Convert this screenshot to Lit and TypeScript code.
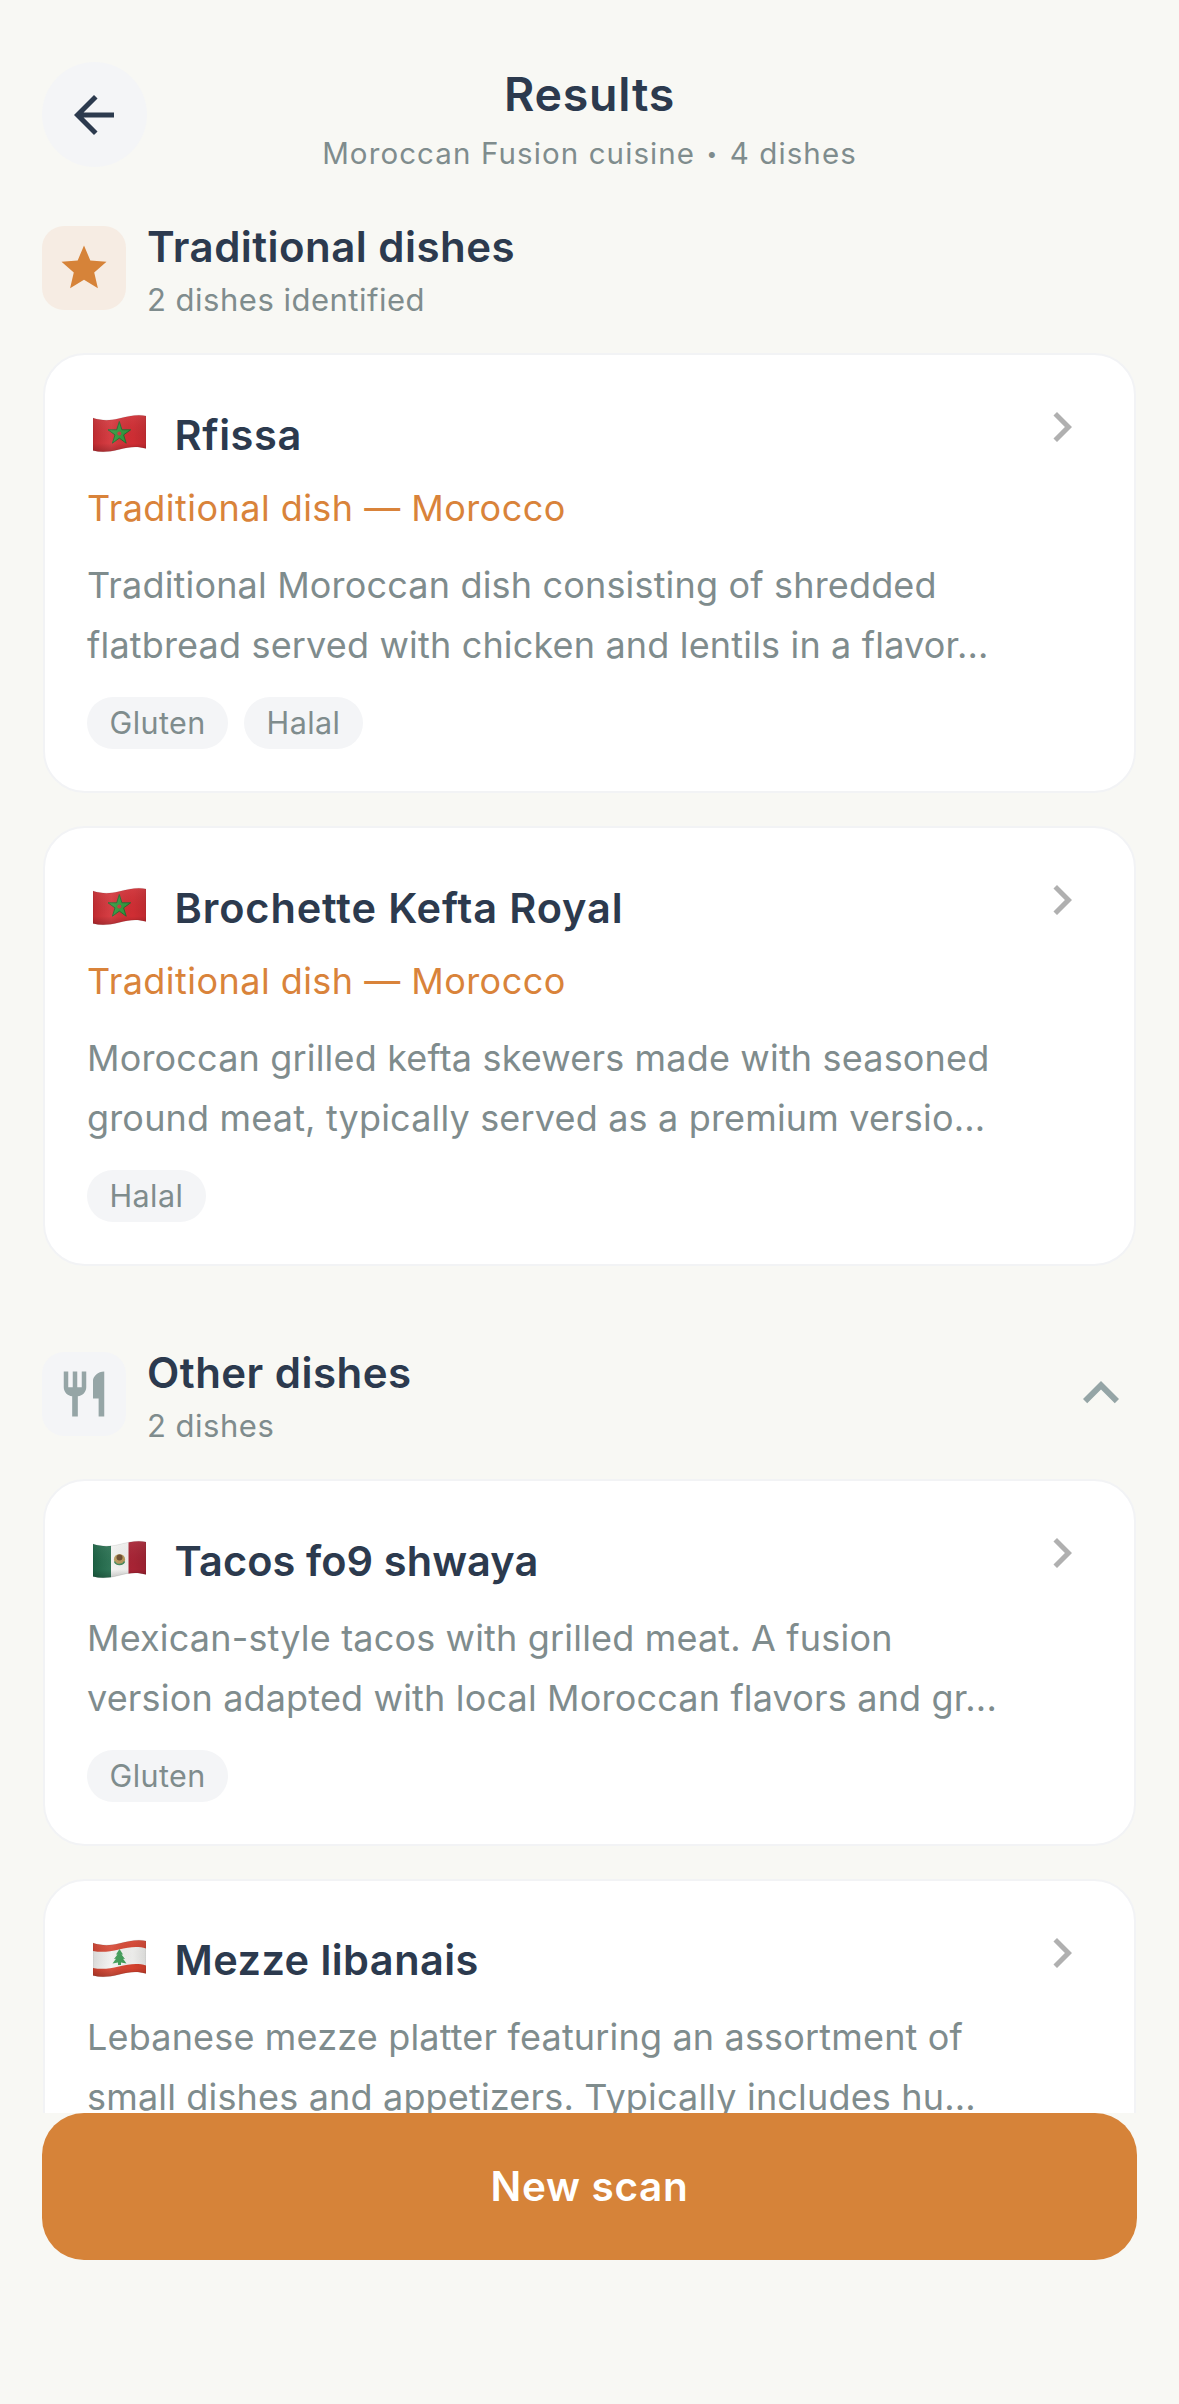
import { LitElement, html, css, svg } from "lit";
import { customElement } from "lit/decorators.js";

const WAVE = "M0 4C8 6.5 16 7 26 4.5C36 2 45 0 53 2V34.5C45 32 36 32.5 26 35.5C16 38 8 38.5 0 36.5Z";

function flag(id: string, body: unknown) {
  return html`<svg class="flag" viewBox="0 0 53 39" aria-hidden="true">
    <defs>
      <clipPath id="wave-${id}"><path d=${WAVE}></path></clipPath>
      <linearGradient id="shade-${id}" x1="0" y1="0" x2="1" y2="0">
        <stop offset="0" stop-color="#000" stop-opacity=".1"></stop>
        <stop offset=".35" stop-color="#fff" stop-opacity=".08"></stop>
        <stop offset=".75" stop-color="#000" stop-opacity=".02"></stop>
        <stop offset="1" stop-color="#000" stop-opacity=".1"></stop>
      </linearGradient>
      <linearGradient id="edge-${id}" x1="0" y1="0" x2="0" y2="1">
        <stop offset="0" stop-color="#fff" stop-opacity=".08"></stop>
        <stop offset=".75" stop-color="#000" stop-opacity="0"></stop>
        <stop offset="1" stop-color="#000" stop-opacity=".22"></stop>
      </linearGradient>
    </defs>
    <g clip-path="url(#wave-${id})">${body}
      <rect width="53" height="39" fill="url(#shade-${id})"></rect>
      <rect width="53" height="39" fill="url(#edge-${id})"></rect>
    </g>
    <path d=${WAVE} fill="none" stroke="#000" stroke-opacity=".12" stroke-width=".7"></path>
  </svg>`;
}

const morocco = () =>
  flag("ma", svg`<rect width="53" height="39" fill="#d42e34"></rect>
    <path d="M26.3 7.5L28.9 15.8H37.6L30.6 20.9L33.2 29.2L26.3 24.1L19.4 29.2L22 20.9L15 15.8H23.7Z" fill="#2f9a3c" stroke="#1d6a2c" stroke-width=".9" stroke-linejoin="round"></path>
    <circle cx="26.3" cy="19.4" r="2" fill="#c8383a"></circle>`);

const mexico = () =>
  flag("mx", svg`<rect width="18" height="39" fill="#1f6b4a"></rect>
    <rect x="18" width="17.5" height="39" fill="#f5f5f3"></rect>
    <rect x="35.5" width="17.5" height="39" fill="#ab2435"></rect>
    <circle cx="26.5" cy="19.5" r="5.6" fill="#b99a5c"></circle>
    <circle cx="26.5" cy="17.5" r="3" fill="#6c4a2c"></circle>
    <path d="M21.5 21.5C23 25.5 30 25.5 31.5 21.5" fill="none" stroke="#3f8a5e" stroke-width="1.4"></path>`);

const lebanon = () =>
  flag("lb", svg`<rect width="53" height="39" fill="#f4f4f2"></rect>
    <path d="M0 0H53V9.5C45 7 36 8 26 10.5C16 13 8 13.5 0 12Z" fill="#d8432f"></path>
    <path d="M0 29C8 30.5 16 30 26 27.5C36 25 45 24 53 26.5V39H0Z" fill="#d8432f"></path>
    <path d="M26.5 10L30 15.5H28.5L32 20L30 19.8L33.5 24.5L28 23.5V26H25V23.5L19.5 24.5L23 19.8L21 20L24.5 15.5H23Z" fill="#3f9e56"></path>`);

const ICON_BACK = "M20 11H7.83l5.59-5.59L12 4l-8 8 8 8 1.41-1.41L7.83 13H20v-2z";
const ICON_STAR = "M12 17.27L18.18 21l-1.64-7.03L22 9.24l-7.19-.61L12 2 9.19 8.63 2 9.24l5.46 4.73L5.82 21z";
const ICON_RESTAURANT = "M11 9H9V2H7v7H5V2H3v7c0 2.12 1.66 3.84 3.75 3.97V22h2.5v-9.03C11.34 12.84 13 11.12 13 9V2h-2v7zm5-3v8h2.5v8H21V2c-2.76 0-5 2.24-5 4z";
const ICON_RIGHT = "M8.59 16.59L13.17 12 8.59 7.41 10 6l6 6-6 6z";
const ICON_UP = "M7.41 15.41L12 10.83l4.59 4.58L18 14l-6-6-6 6z";

const icon = (d: string, cls: string) =>
  html`<svg class=${cls} viewBox="0 0 24 24" aria-hidden="true"><path d=${d}></path></svg>`;

interface Dish {
  flag: () => unknown;
  name: string;
  nameSpacing: number;
  category?: string;
  lines: [string, string];
  tags: string[];
}

const traditional: Dish[] = [
  {
    flag: morocco,
    name: "Rfissa",
    nameSpacing: 0.6,
    category: "Traditional dish — Morocco",
    lines: ["Traditional Moroccan dish consisting of shredded", "flatbread served with chicken and lentils in a flavor..."],
    tags: ["Gluten", "Halal"],
  },
  {
    flag: morocco,
    name: "Brochette Kefta Royal",
    nameSpacing: 0.88,
    category: "Traditional dish — Morocco",
    lines: ["Moroccan grilled kefta skewers made with seasoned", "ground meat, typically served as a premium versio..."],
    tags: ["Halal"],
  },
];

const others: Dish[] = [
  {
    flag: mexico,
    name: "Tacos fo9 shwaya",
    nameSpacing: 0.1,
    lines: ["Mexican-style tacos with grilled meat. A fusion", "version adapted with local Moroccan flavors and gr..."],
    tags: ["Gluten"],
  },
  {
    flag: lebanon,
    name: "Mezze libanais",
    nameSpacing: 0.45,
    lines: ["Lebanese mezze platter featuring an assortment of", "small dishes and appetizers. Typically includes hu..."],
    tags: ["Vegetarian"],
  },
];

@customElement("app-root")
export class AppRoot extends LitElement {
  static styles = css`
    :host {
      display: block;
      font-family: Inter, "Liberation Sans", sans-serif;
      color: #2c3a4e;
    }
    * { box-sizing: border-box; }
    .page {
      height: 2404px;
      background: #f8f8f4;
      display: flex;
      flex-direction: column;
      overflow: hidden;
    }
    .scroll {
      flex: 1;
      min-height: 0;
      overflow: hidden;
      padding: 62px 42px 0;
    }
    .header {
      display: grid;
      grid-template-columns: 105px 1fr 105px;
      margin-bottom: 54px;
    }
    .back {
      width: 105px;
      height: 105px;
      border-radius: 50%;
      background: #f4f5f7;
      display: flex;
      align-items: center;
      justify-content: center;
    }
    .i-back { width: 60px; height: 60px; fill: #2c3a4e; margin-left: -1px; }
    .head-text { text-align: center; padding-top: 5px; }
    .head-title { font-size: 46.5px; line-height: 54px; font-weight: 600; letter-spacing: .75px; }
    .head-sub { font-size: 29.5px; line-height: 38px; margin-top: 13px; color: #7f8c8d; white-space: nowrap; letter-spacing: 1.1px; }
    .dot { font-size: 19px; line-height: 0; vertical-align: 3px; margin: 0 2px; }
    .section-head { display: flex; align-items: flex-start; gap: 21px; margin-bottom: 34px; }
    .sec-icon {
      width: 84px;
      height: 84px;
      border-radius: 22px;
      flex: none;
      display: flex;
      align-items: center;
      justify-content: center;
      background: #f4f5f7;
    }
    .sec-icon.warm { background: #f6ece3; }
    .i-star { width: 54px; height: 54px; fill: #d68339; }
    .i-rest { width: 54px; height: 54px; fill: #95a5a6; }
    .i-up { width: 72px; height: 72px; fill: #95a5a6; margin-left: auto; margin-top: 5px; flex: none; }
    .sec-title { font-size: 42px; line-height: 42px; font-weight: 600; letter-spacing: .47px; }
    .sec-sub { font-size: 31px; line-height: 38px; margin-top: 13px; color: #7f8c8d; letter-spacing: .5px; }
    .cards { display: flex; flex-direction: column; gap: 33px; padding: 0 1px; }
    .section + .section { margin-top: 86px; }
    .card {
      background: #fff;
      border: 2px solid #f2f3f5;
      border-radius: 42px;
      padding: 42px;
    }
    .title-row { display: flex; align-items: flex-start; margin-bottom: 9.5px; }
    .title-left { display: flex; align-items: center; height: 75px; flex: 1; min-width: 0; }
    .flag { width: 53px; height: 39px; margin: -3px 28.5px 0 6px; flex: none; }
    .name { font-size: 41.5px; font-weight: 600; line-height: 72px; }
    .i-right { width: 60px; height: 60px; fill: #b0b0b0; flex: none; }
    .category { font-size: 36px; line-height: 44px; padding-top: 4.5px; margin-bottom: 25px; color: #d9833a; letter-spacing: .46px; }
    .desc { font-size: 36px; line-height: 60px; color: #7f8c8d; white-space: nowrap; letter-spacing: .17px; }
    .tags { display: flex; gap: 16px; margin-top: 22px; }
    .tag {
      height: 52px;
      padding: 0 22.5px;
      border-radius: 26px;
      background: #f4f5f7;
      color: #7f8c8d;
      font-size: 30.5px;
      line-height: 52px;
      letter-spacing: .4px;
    }
    .cta {
      margin: 0 42px 144px;
      height: 147px;
      flex: none;
      border-radius: 42px;
      background: #d68339;
      color: #fff;
      font-size: 40.5px;
      font-weight: 600;
      letter-spacing: .65px;
      display: flex;
      align-items: center;
      justify-content: center;
    }
  `;

  private card(d: Dish) {
    return html`<div class="card">
      <div class="title-row">
        <div class="title-left">${d.flag()}<span class="name" style="letter-spacing:${d.nameSpacing}px">${d.name}</span></div>
        ${icon(ICON_RIGHT, "i-right")}
      </div>
      ${d.category ? html`<div class="category">${d.category}</div>` : null}
      <div class="desc">${d.lines[0]}<br />${d.lines[1]}</div>
      <div class="tags">${d.tags.map((t) => html`<span class="tag">${t}</span>`)}</div>
    </div>`;
  }

  render() {
    return html`<div class="page">
      <div class="scroll">
        <div class="header">
          <div class="back">${icon(ICON_BACK, "i-back")}</div>
          <div class="head-text">
            <div class="head-title">Results</div>
            <div class="head-sub">Moroccan Fusion cuisine <span class="dot">•</span> 4 dishes</div>
          </div>
        </div>
        <div class="section">
          <div class="section-head">
            <div class="sec-icon warm">${icon(ICON_STAR, "i-star")}</div>
            <div>
              <div class="sec-title">Traditional dishes</div>
              <div class="sec-sub">2 dishes identified</div>
            </div>
          </div>
          <div class="cards">${traditional.map((d) => this.card(d))}</div>
        </div>
        <div class="section">
          <div class="section-head">
            <div class="sec-icon">${icon(ICON_RESTAURANT, "i-rest")}</div>
            <div>
              <div class="sec-title">Other dishes</div>
              <div class="sec-sub">2 dishes</div>
            </div>
            ${icon(ICON_UP, "i-up")}
          </div>
          <div class="cards">${others.map((d) => this.card(d))}</div>
        </div>
      </div>
      <div class="cta">New scan</div>
    </div>`;
  }
}
